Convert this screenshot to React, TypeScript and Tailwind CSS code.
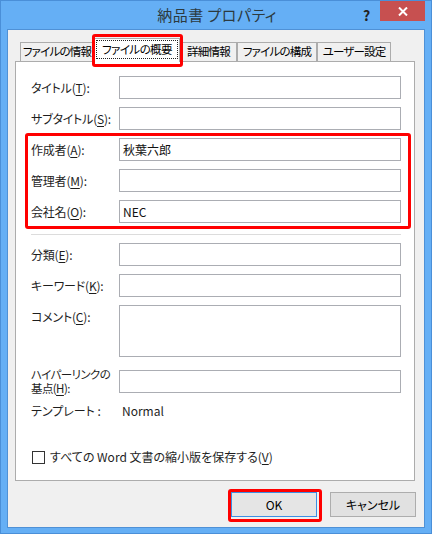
import React from 'react';

const FONT = "font-['Noto_Sans_CJK_JP','Noto_Sans',sans-serif] [font-feature-settings:'palt']";

const Key = ({ k, colon = true }: { k: string; colon?: boolean }) => (
    <>(<u className="underline underline-offset-2">{k}</u>){colon ? ':' : ''}</>
);

const Field = ({ label, value, tall }: { label: React.ReactNode; value?: string; tall?: boolean }) => (
    <div className="flex items-start">
        <div className="w-[88px] h-[23px] flex items-center whitespace-nowrap text-[12px] leading-[14px] tracking-[-0.2px] text-[#1e1e1e]">{label}</div>
        <div className={`w-[282px] ${tall ? 'h-[52px] items-start pt-[3px]' : 'h-[23px] items-center'} flex border border-[#abadb3] bg-white pl-[3px] text-[12px] text-[#111]`}>
            {value}
        </div>
    </div>
);

const TABS = ['ファイルの情報', 'ファイルの概要', '詳細情報', 'ファイルの構成', 'ユーザー設定'];
const TAB_W = ['w-[74px]', 'w-[86px]', 'w-[57px]', 'w-[80px]', 'w-[74px]'];

export default function App() {
    return (
        <div className={`relative w-[432px] h-[534px] bg-[#65aff5] border border-[#4a8fd8] flex flex-col ${FONT}`}>
            {/* title bar */}
            <div className="relative h-[28px] flex items-center justify-center">
                <span className="text-[15px] text-[#2c3a3f] tracking-[0.5px] pl-[2px]">納品書 プロパティ</span>
                <span className="absolute left-[362px] top-[4px] text-[14px] font-bold text-[#222]">?</span>
                <div className="absolute right-[6px] top-0 w-[45px] h-[20px] bg-[#c75050] flex items-center justify-center">
                    <svg width="10" height="9" viewBox="0 0 10 9">
                        <path d="M1 0.5 L9 8.5 M9 0.5 L1 8.5" stroke="white" strokeWidth="2" />
                    </svg>
                </div>
            </div>

            {/* client area */}
            <div className="mx-[6px] h-[499px] border border-[#4f91d6] bg-[#f0f0f0] flex flex-col">
                <div className="flex items-end pt-[7px] pl-[12px] h-[31px]">
                    {TABS.map((t, i) =>
                        i === 1 ? (
                            <div key={t} className={`${TAB_W[i]} h-[24px] -mb-px relative z-10 bg-white border border-b-0 border-[#acacac] flex items-start justify-center pt-[1px]`}>
                                <span className="border border-dotted border-[#222] px-[5px] h-[19px] flex items-center whitespace-nowrap text-[11.5px] tracking-[-0.6px] text-black">{t}</span>
                            </div>
                        ) : (
                            <div key={t} className={`${TAB_W[i]} h-[19px] bg-[#f0f0f0] border border-b-0 border-[#acacac] flex items-center justify-center whitespace-nowrap text-[11.5px] tracking-[-0.8px] text-black`}>
                                {t}
                            </div>
                        )
                    )}
                </div>

                {/* panel */}
                <div className="ml-[7px] w-[400px] h-[420px] bg-white border border-[#acacac] pl-[15px] pt-[14px] flex flex-col">
                    <div className="flex flex-col gap-[8px]">
                        <Field label={<>タイトル<Key k="T" /></>} />
                        <Field label={<>サブタイトル<Key k="S" /></>} />
                        <Field label={<>作成者<Key k="A" /></>} value="秋葉六郎" />
                        <Field label={<>管理者<Key k="M" /></>} />
                        <Field label={<>会社名<Key k="O" /></>} value="NEC" />
                    </div>
                    <div className="mt-[11px] w-[370px] h-px bg-[#dcdcdc]" />
                    <div className="mt-[8px] flex flex-col gap-[8px]">
                        <Field label={<>分類<Key k="E" /></>} />
                        <Field label={<>キーワード<Key k="K" /></>} />
                        <Field label={<>コメント<Key k="C" /></>} tall />
                    </div>
                    <div className="mt-[10px] flex items-center">
                        <div className="w-[88px] flex flex-col whitespace-nowrap text-[11.5px] leading-[14px] tracking-[-0.6px] text-[#1e1e1e]">
                            <span>ハイパーリンクの</span>
                            <span>基点<Key k="H" /></span>
                        </div>
                        <div className="w-[282px] h-[23px] border border-[#abadb3] bg-white" />
                    </div>
                    <div className="mt-[8px] flex items-center h-[16px] text-[12px] text-[#1e1e1e]">
                        <span className="w-[91px]">テンプレート :</span>
                        <span>Normal</span>
                    </div>
                    <div className="mt-[29px] flex items-center gap-[5px] text-[12px] text-[#1e1e1e]">
                        <span className="w-[13px] h-[13px] ml-[1px] border border-[#333] bg-white" />
                        <span className="whitespace-nowrap">すべての Word 文書の縮小版を保存する<Key k="V" colon={false} /></span>
                    </div>
                </div>

                {/* buttons */}
                <div className="mt-[11px] flex justify-end gap-[13px] pr-[8px]">
                    <button className="w-[86px] h-[25px] border border-[#3c8fe4] bg-[#e5e5e5] text-[12px] text-black">OK</button>
                    <button className="w-[86px] h-[25px] border border-[#adadad] bg-[#e1e1e1] text-[12px] text-black">キャンセル</button>
                </div>
            </div>

            {/* red highlight annotations */}
            <div className="absolute left-[91px] top-[33px] w-[91px] h-[33px] border-[3px] border-[#ff0000] rounded-[3px] z-20" />
            <div className="absolute left-[24px] top-[132px] w-[386px] h-[96px] border-[3px] border-[#ff0000] rounded-[3px] z-20" />
            <div className="absolute left-[227px] top-[488px] w-[94px] h-[33px] border-[3px] border-[#ff0000] rounded-[3px] z-20" />
        </div>
    );
}
